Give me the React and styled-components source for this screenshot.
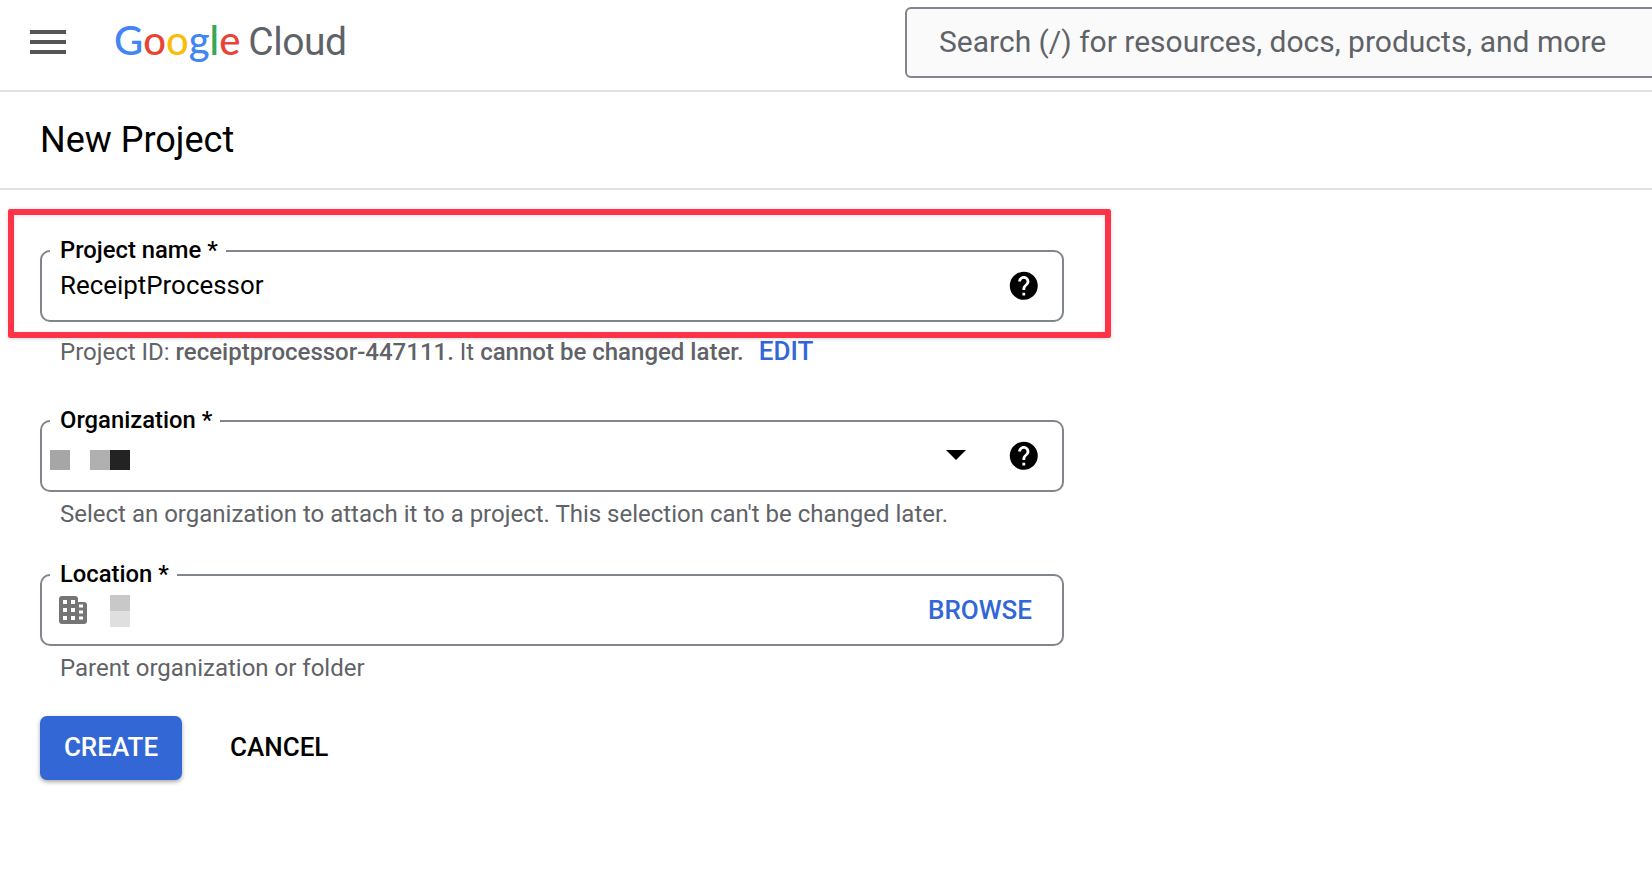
import React from "react";
import styled, { createGlobalStyle } from "styled-components";
import { MdHelp } from "react-icons/md";

const GlobalStyle = createGlobalStyle`
  html, body {
    margin: 0;
    background: #fff;
    font-family: Roboto, "Liberation Sans", sans-serif;
  }
`;

const Page = styled.div`
  position: relative;
  width: 1652px;
  height: 894px;
  overflow: hidden;
  background: #fff;
`;

const Header = styled.header`
  display: flex;
  align-items: center;
  height: 92px;
  box-sizing: border-box;
  padding: 0 0 6px 30px;
  border-bottom: 2px solid #e0e0e0;
`;

const Hamburger = styled.div`
  display: flex;
  flex-direction: column;
  gap: 6px;
  width: 36px;
  flex-shrink: 0;
`;

const HamburgerBar = styled.span`
  height: 4px;
  background: #555;
`;

const Logo = styled.div`
  display: flex;
  align-items: baseline;
  width: 232px;
  margin: -3px 0 0 48px;
  font-family: Lato, Roboto, sans-serif;
  font-size: 40px;
  font-weight: 500;
  line-height: 1;
  flex-shrink: 0;
`;

const LogoLetter = styled.span`
  color: ${({ $color }) => $color};
`;

const LogoProduct = styled.span`
  margin-left: 8px;
  color: #5f6368;
  font-family: Roboto, sans-serif;
  font-size: 39px;
  font-weight: 400;
  letter-spacing: -0.5px;
`;

const SearchBox = styled.div`
  display: flex;
  align-items: center;
  flex-shrink: 0;
  width: 900px;
  height: 71px;
  margin-left: 559px;
  padding: 0 0 2px 32px;
  box-sizing: border-box;
  border: 2px solid #80868b;
  border-radius: 6px;
  background: #fafafa;
  color: #5f6368;
  font-size: 30px;
`;

const TitleRow = styled.div`
  display: flex;
  align-items: center;
  height: 96px;
  padding-left: 40px;
  border-bottom: 2px solid #e0e0e0;
`;

const Title = styled.h1`
  margin: 0;
  color: #000;
  font-size: 36px;
  font-weight: 400;
`;

const Form = styled.form`
  display: flex;
  flex-direction: column;
  width: 1024px;
  padding: 60px 0 0 40px;
`;

const FieldGroup = styled.div`
  margin-bottom: ${({ $gap }) => $gap}px;
`;

const FieldBox = styled.div`
  position: relative;
  display: flex;
  align-items: center;
  height: 72px;
  box-sizing: border-box;
  padding: 0 24px 0 18px;
  border: 2px solid #80868b;
  border-radius: 10px;
`;

const FloatLabel = styled.label`
  position: absolute;
  top: -16px;
  left: 8px;
  padding: 0 8px 0 10px;
  background: #fff;
  color: #000;
  font-size: 23.8px;
  font-weight: 500;
  line-height: 28px;
`;

const Value = styled.span`
  flex: 1;
  margin-top: -2px;
  color: #000;
  font-size: 25.9px;
`;

const Redacted = styled.div`
  display: flex;
  flex: 1;
  margin: ${({ $margin }) => $margin};
`;

const RedactedCell = styled.span`
  width: ${({ $w }) => $w}px;
  height: ${({ $h }) => $h}px;
  margin-right: ${({ $gap }) => $gap || 0}px;
  background: ${({ $color }) => $color};
`;

const RedactedStack = styled.div`
  display: flex;
  flex-direction: column;
`;

const Arrow = styled.span`
  width: 0;
  height: 0;
  margin: -2px 41px 0 0;
  border-left: 10px solid transparent;
  border-right: 10px solid transparent;
  border-top: 10px solid #000;
`;

const HelpIcon = styled(MdHelp)`
  flex-shrink: 0;
  margin-right: -3px;
  font-size: 33.6px;
  color: #000;
`;

const BuildingSvg = styled.svg`
  flex-shrink: 0;
  width: 28px;
  height: 28px;
  margin-left: -1px;
`;

const Hint = styled.p`
  margin: ${({ $top }) => $top}px 0 0 20px;
  color: #5f6368;
  font-size: 24px;
  line-height: 30px;
`;

const Strong = styled.b`
  font-weight: 500;
`;

const LinkText = styled.span`
  color: #3367d6;
  font-size: 26px;
  font-weight: 500;
`;

const EditLink = styled(LinkText)`
  margin-left: 15px;
`;

const BrowseLink = styled(LinkText)`
  margin-right: 6px;
`;

const Actions = styled.div`
  display: flex;
  align-items: center;
  gap: 48px;
`;

const CreateButton = styled.button`
  width: 142px;
  height: 64px;
  padding: 0 0 2px;
  border: 0;
  border-radius: 7px;
  background: #3367d6;
  box-shadow: 0 2px 4px rgba(0, 0, 0, 0.35);
  color: #fff;
  font: 500 26px Roboto, sans-serif;
`;

const CancelButton = styled.button`
  padding: 0 0 2px;
  border: 0;
  background: none;
  color: #000;
  font: 500 26px Roboto, sans-serif;
`;

const Highlight = styled.div`
  position: absolute;
  top: 209px;
  left: 8px;
  width: 1103px;
  height: 129px;
  box-sizing: border-box;
  border: 6px solid #ff3347;
  border-radius: 2px;
  box-shadow: 0 1px 4px rgba(0, 0, 0, 0.15), inset 0 1px 4px rgba(0, 0, 0, 0.1);
  pointer-events: none;
`;

const googleLetters = [
  ["G", "#4285f4"],
  ["o", "#ea4335"],
  ["o", "#fbbc04"],
  ["g", "#4285f4"],
  ["l", "#34a853"],
  ["e", "#ea4335"],
];

const Building = () => (
  <BuildingSvg viewBox="0 0 28 28">
    <rect x="0" y="0" width="19" height="28" rx="3" fill="#757575" />
    <rect x="10" y="6" width="18" height="22" rx="3" fill="#757575" />
    {[4, 12].map((x) =>
      [4, 12, 20].map((y) => <rect key={`${x}-${y}`} x={x} y={y} width="4" height="4" fill="#fff" />)
    )}
    {[8.5, 14.5, 20.5].map((y) => (
      <rect key={y} x="20" y={y} width="4" height="3" fill="#fff" />
    ))}
  </BuildingSvg>
);

export default function App() {
  return (
    <Page>
      <GlobalStyle />
      <Header>
        <Hamburger>
          <HamburgerBar />
          <HamburgerBar />
          <HamburgerBar />
        </Hamburger>
        <Logo>
          {googleLetters.map(([letter, color], i) => (
            <LogoLetter key={i} $color={color}>
              {letter}
            </LogoLetter>
          ))}
          <LogoProduct>Cloud</LogoProduct>
        </Logo>
        <SearchBox>Search (/) for resources, docs, products, and more</SearchBox>
      </Header>

      <TitleRow>
        <Title>New Project</Title>
      </TitleRow>

      <Form>
        <FieldGroup $gap={53}>
          <FieldBox>
            <FloatLabel>Project name *</FloatLabel>
            <Value>ReceiptProcessor</Value>
            <HelpIcon />
          </FieldBox>
          <Hint $top={14}>
            Project ID: <Strong>receiptprocessor-447111.</Strong> It{" "}
            <Strong>cannot be changed later.</Strong>
            <EditLink>EDIT</EditLink>
          </Hint>
        </FieldGroup>

        <FieldGroup $gap={45}>
          <FieldBox>
            <FloatLabel>Organization *</FloatLabel>
            <Redacted $margin="8px 0 0 -10px">
              <RedactedCell $w={20} $h={20} $gap={20} $color="#a6a6a6" />
              <RedactedCell $w={20} $h={20} $color="#b0b0b0" />
              <RedactedCell $w={20} $h={20} $color="#232323" />
            </Redacted>
            <Arrow />
            <HelpIcon />
          </FieldBox>
          <Hint $top={7}>
            Select an organization to attach it to a project. This selection can't be changed later.
          </Hint>
        </FieldGroup>

        <FieldGroup $gap={33}>
          <FieldBox>
            <FloatLabel>Location *</FloatLabel>
            <Building />
            <Redacted $margin="2px 0 0 23px">
              <RedactedStack>
                <RedactedCell $w={20} $h={16} $color="#c8c8c8" />
                <RedactedCell $w={20} $h={16} $color="#dfdfdf" />
              </RedactedStack>
            </Redacted>
            <BrowseLink>BROWSE</BrowseLink>
          </FieldBox>
          <Hint $top={7}>Parent organization or folder</Hint>
        </FieldGroup>

        <Actions>
          <CreateButton type="button">CREATE</CreateButton>
          <CancelButton type="button">CANCEL</CancelButton>
        </Actions>
      </Form>

      <Highlight />
    </Page>
  );
}
